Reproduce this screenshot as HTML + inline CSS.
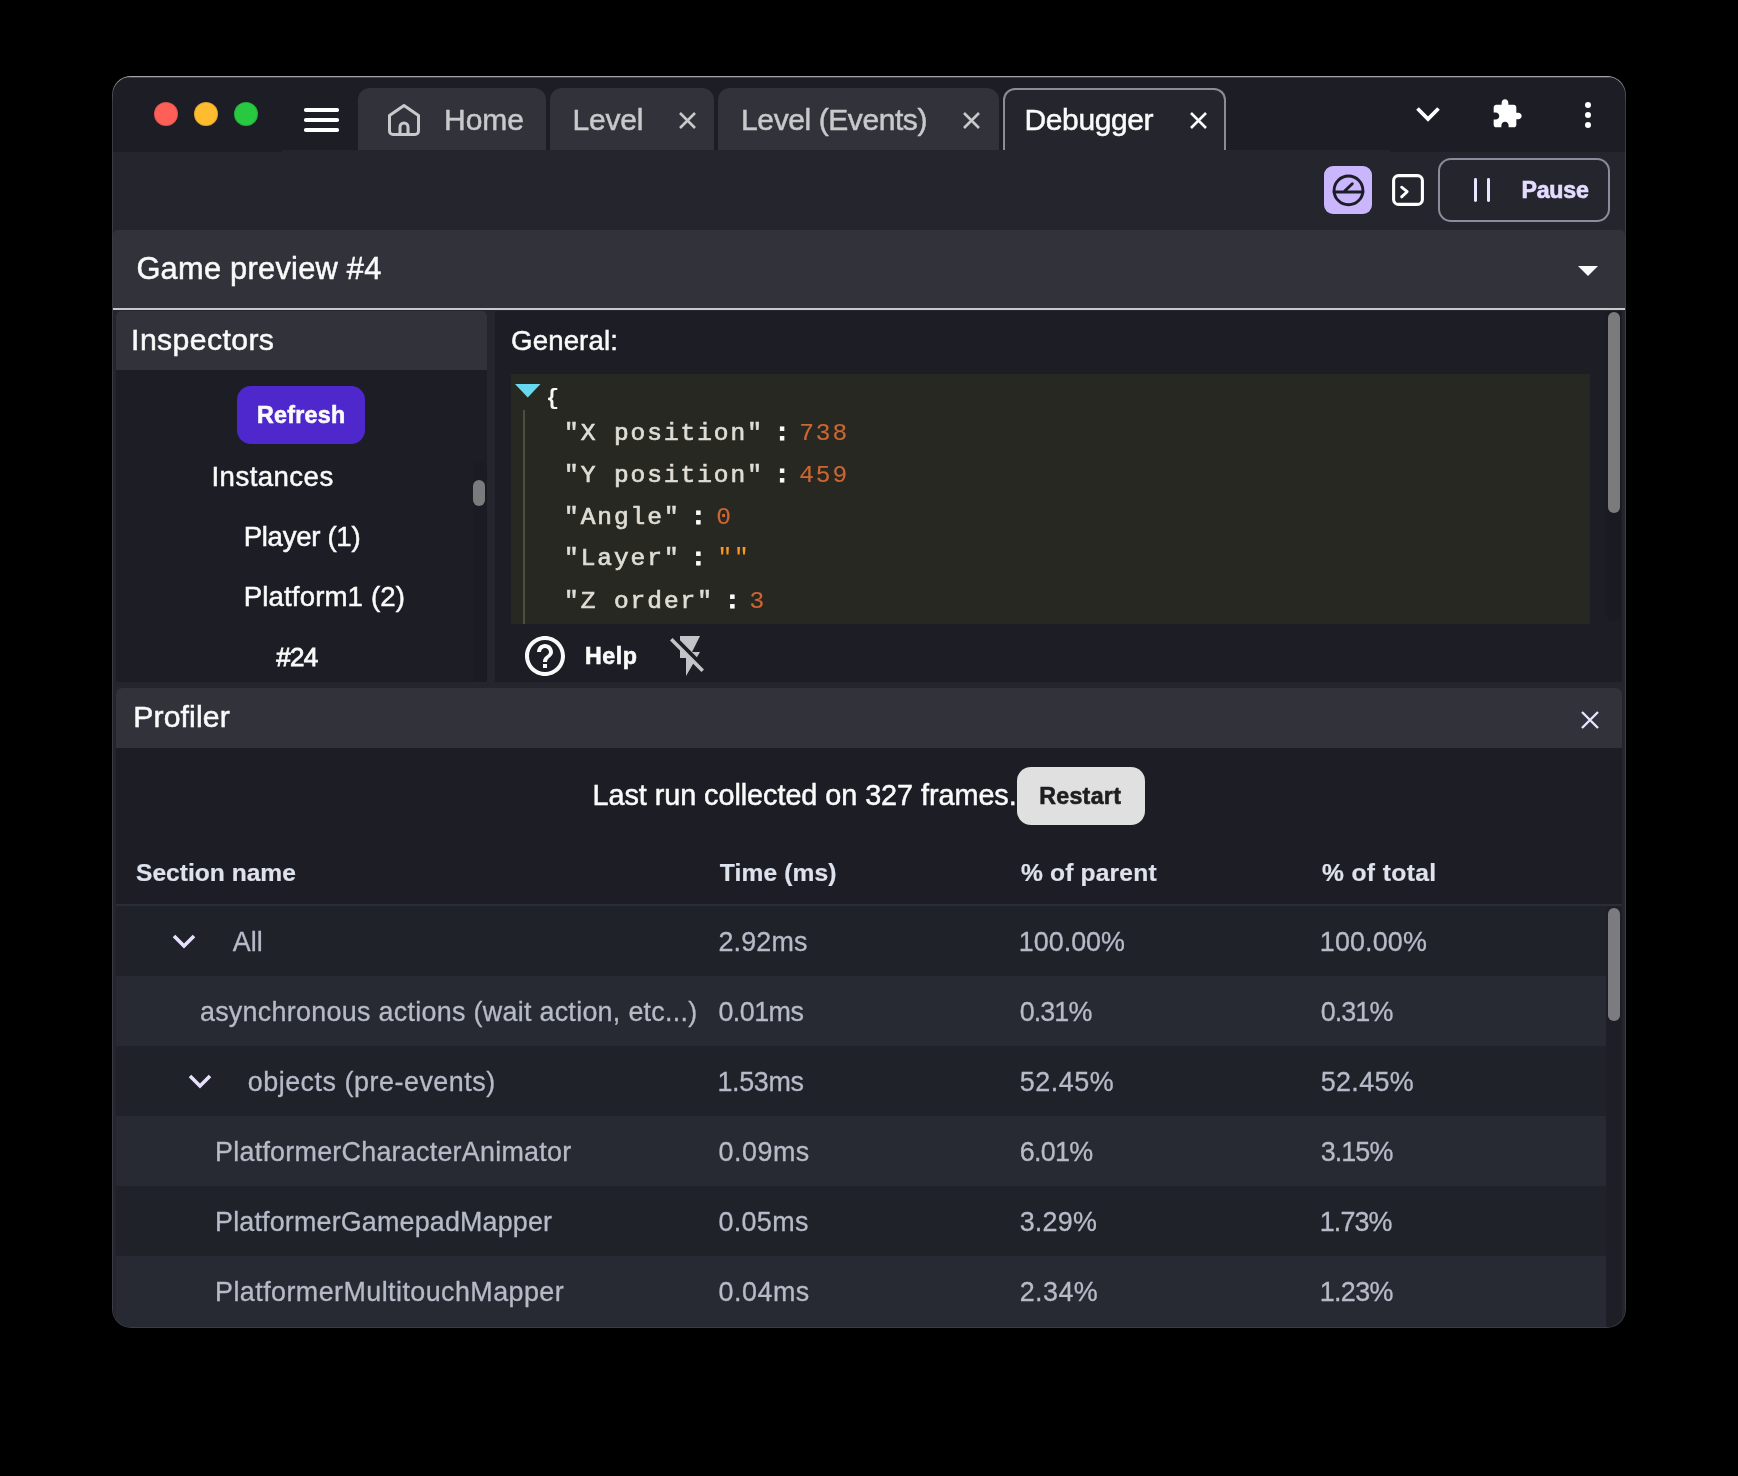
<!DOCTYPE html>
<html><head><meta charset="utf-8">
<style>
*{box-sizing:border-box;margin:0;padding:0}
html,body{width:1738px;height:1476px;background:#000;overflow:hidden;font-family:"Liberation Sans",sans-serif}
.a{position:absolute}
.t{position:absolute;line-height:1;white-space:nowrap}
#frame{position:absolute;left:112px;top:76px;width:1514px;height:1252px;border-radius:19px;background:linear-gradient(#a2a2a8 0px,#a2a2a8 2px,#8a8a90 8px,#55555d 16px,#3b3b44 24px,#3b3b44 100%)}
#win{position:absolute;left:113px;top:77px;width:1512px;height:1250px;border-radius:18px;overflow:hidden;background:#25252e}
#pg{position:absolute;left:-113px;top:-77px;width:1738px;height:1476px;will-change:transform}
.tab{position:absolute;top:88px;height:62px;background:#32323b;border-radius:12px 12px 0 0}
svg{position:absolute;overflow:visible}
.mono{position:absolute;line-height:1;white-space:pre;font-family:"Liberation Mono",monospace}
</style></head>
<body>
<div id="frame"></div><div id="win"><div id="pg">
<div class="a" style="left:113px;top:77px;width:1512px;height:73px;background:#1d1d26"></div>
<div class="a" style="left:113px;top:150px;width:169px;height:2px;background:#1d1d26"></div>
<div class="a" style="left:113px;top:77px;width:1512px;height:1px;background:rgba(170,170,176,0.28)"></div>
<div class="a" style="left:1390px;top:150px;width:235px;height:2px;background:#1d1d26"></div>
<div class="a" style="left:154px;top:102px;width:24px;height:24px;border-radius:50%;background:#fe5f57;box-shadow:inset 0 0 0 1px rgba(0,0,0,0.12)"></div>
<div class="a" style="left:194px;top:102px;width:24px;height:24px;border-radius:50%;background:#febc2e;box-shadow:inset 0 0 0 1px rgba(0,0,0,0.12)"></div>
<div class="a" style="left:234px;top:102px;width:24px;height:24px;border-radius:50%;background:#28c840;box-shadow:inset 0 0 0 1px rgba(0,0,0,0.12)"></div>
<div class="a" style="left:304px;top:108.2px;width:35px;height:3.6px;border-radius:1.8px;background:#fff"></div>
<div class="a" style="left:304px;top:118.2px;width:35px;height:3.6px;border-radius:1.8px;background:#fff"></div>
<div class="a" style="left:304px;top:128.2px;width:35px;height:3.6px;border-radius:1.8px;background:#fff"></div>
<div class="tab" style="left:358px;width:188px"></div>
<svg style="left:388px;top:104px" width="32" height="32" viewBox="0 0 32 32"><path d="M1.5 11.5 L16 1.5 L30.5 11.5 V27 a3.5 3.5 0 0 1 -3.5 3.5 H5 a3.5 3.5 0 0 1 -3.5 -3.5 Z M12 30.5 V23 a4 4 0 0 1 8 0 V30.5" fill="none" stroke="#c9c9cc" stroke-width="3" stroke-linejoin="round"/></svg>
<div class="tab" style="left:550px;width:164px"></div>
<div class="tab" style="left:718px;width:281px"></div>
<div class="tab" style="left:1003px;width:223px;background:#25252e;border:2px solid #8c8c92;border-bottom:none"></div>

<svg style="left:679px;top:112px" width="17" height="17" viewBox="0 0 17 17"><path d="M1 1L16 16M16 1L1 16" stroke="#c9c9cc" stroke-width="2.6"/></svg>
<svg style="left:963px;top:112px" width="17" height="17" viewBox="0 0 17 17"><path d="M1 1L16 16M16 1L1 16" stroke="#c9c9cc" stroke-width="2.6"/></svg>
<svg style="left:1190px;top:112px" width="17" height="17" viewBox="0 0 17 17"><path d="M1 1L16 16M16 1L1 16" stroke="#fafafa" stroke-width="2.6"/></svg>
<div class="t" style="left:444.00px;top:104.50px;font-size:30.0px;font-weight:400;color:#c9c9cc;letter-spacing:-0.000px;-webkit-text-stroke:0.5px currentColor">Home</div>
<div class="t" style="left:572.50px;top:104.50px;font-size:30.0px;font-weight:400;color:#c9c9cc;letter-spacing:-0.225px;-webkit-text-stroke:0.5px currentColor">Level</div>
<div class="t" style="left:741.10px;top:104.50px;font-size:30.0px;font-weight:400;color:#c9c9cc;letter-spacing:-0.415px;-webkit-text-stroke:0.5px currentColor">Level (Events)</div>
<div class="t" style="left:1024.50px;top:104.50px;font-size:30.0px;font-weight:400;color:#fafafa;letter-spacing:-0.386px;-webkit-text-stroke:0.5px currentColor">Debugger</div>
<svg style="left:1416px;top:107px" width="24" height="15" viewBox="0 0 24 15"><path d="M1.5 1.5L12 12L22.5 1.5" fill="none" stroke="#fff" stroke-width="3.8"/></svg>
<svg style="left:1491.3px;top:98.4px" width="32" height="32" viewBox="0 0 24 24"><path fill="#fff" d="M20.5 11H19V7c0-1.1-.9-2-2-2h-4V3.5C13 2.120 11.88 1 10.5 1S8 2.12 8 3.5V5H4c-1.1 0-1.99.9-1.99 2v3.8H3.5c1.49 0 2.7 1.21 2.7 2.7s-1.21 2.7-2.7 2.7H2V20c0 1.1.9 2 2 2h3.8v-1.5c0-1.49 1.21-2.7 2.7-2.7 1.49 0 2.7 1.21 2.7 2.7V22H17c1.1 0 2-.9 2-2v-4h1.5c1.38 0 2.5-1.12 2.5-2.5S21.88 11 20.5 11z"/></svg>
<div class="a" style="left:1585px;top:101.5px;width:6.2px;height:6.2px;border-radius:50%;background:#fff"></div>
<div class="a" style="left:1585px;top:111.5px;width:6.2px;height:6.2px;border-radius:50%;background:#fff"></div>
<div class="a" style="left:1585px;top:121.5px;width:6.2px;height:6.2px;border-radius:50%;background:#fff"></div>
<div class="a" style="left:1324px;top:166px;width:48px;height:48px;border-radius:9px;background:#c9b6fc"></div>
<svg style="left:1324px;top:166px" width="48" height="48" viewBox="0 0 48 48"><circle cx="24.5" cy="24.4" r="14.4" fill="none" stroke="#1d1d26" stroke-width="2.9"/><path d="M10 26H39M19.7 26L28.3 17.7" fill="none" stroke="#1d1d26" stroke-width="2.9" stroke-linecap="round"/></svg>
<svg style="left:1392px;top:174px" width="32" height="32" viewBox="0 0 32 32"><rect x="1.6" y="1.6" width="28.8" height="28.8" rx="5" fill="none" stroke="#fff" stroke-width="3.1"/><path d="M9.6 13.2L15.2 17.7L9.6 22.9" fill="none" stroke="#fff" stroke-width="2.8" stroke-linecap="round" stroke-linejoin="round"/></svg>
<div class="a" style="left:1438px;top:158px;width:172px;height:64px;border-radius:13px;border:2px solid #8e8a9c"></div>
<div class="a" style="left:1474.2px;top:178px;width:2.8px;height:24px;border-radius:1.4px;background:#ebe5ff"></div>
<div class="a" style="left:1487px;top:178px;width:2.8px;height:24px;border-radius:1.4px;background:#ebe5ff"></div>

<div class="t" style="left:1521.40px;top:178.95px;font-size:23.2px;font-weight:700;color:#e5ddff;letter-spacing:-0.225px;-webkit-text-stroke:0.6px currentColor">Pause</div>
<div class="a" style="left:113px;top:230px;width:1512px;height:78px;background:#32323b;border-radius:5px 5px 0 0"></div>
<svg style="left:1578px;top:266px" width="20" height="10" viewBox="0 0 20 10"><path d="M0 0H20L10 10Z" fill="#fafafa"/></svg>
<div class="a" style="left:113px;top:308px;width:1512px;height:2px;background:#c9c9cc"></div>
<div class="a" style="left:113px;top:310px;width:1512px;height:1017px;background:#25252e"></div>
<div class="a" style="left:116px;top:311px;width:371px;height:371px;background:#1d1d26;border-radius:5px 5px 0 0;overflow:hidden"><div class="a" style="left:0;top:0;width:371px;height:59px;background:#32323b"></div></div>
<div class="a" style="left:237px;top:386px;width:128px;height:58px;border-radius:14px;background:#4f28cd"></div>
<div class="a" style="left:473px;top:462px;width:14px;height:220px;border-radius:7px 7px 0 0;background:#1b1b23"></div>
<div class="a" style="left:473px;top:480px;width:12px;height:26px;border-radius:6px;background:#7b7b7d"></div>
<div class="a" style="left:495px;top:311px;width:1127px;height:371px;background:#1d1d26"></div>
<div class="a" style="left:511px;top:374px;width:1079px;height:250px;background:#272822"></div>
<svg style="left:515px;top:384px" width="25.5" height="13.5" viewBox="0 0 25.5 13.5"><path d="M0 0H25.5L12.75 13.5Z" fill="#66d9ef"/></svg>
<div class="a" style="left:523px;top:410px;width:2px;height:214px;background:#4f4c40"></div>
<svg style="left:521px;top:632px" width="48" height="48" viewBox="0 0 24 24"><path fill="#fafafa" d="M11 18h2v-2h-2v2zm1-16C6.480 2 2 6.48 2 12s4.48 10 10 10 10-4.48 10-10S17.52 2 12 2zm0 18c-4.41 0-8-3.59-8-8s3.59-8 8-8 8 3.59 8 8-3.59 8-8 8zm0-14c-2.21 0-4 1.79-4 4h2c0-1.1.9-2 2-2s2 .9 2 2c0 2-3 1.75-3 5h2c0-2.25 3-2.5 3-5 0-2.21-1.79-4-4-4z"/></svg>
<svg style="left:666px;top:632px" width="48" height="48" viewBox="0 0 24 24"><path fill="#c4c4c8" d="M3.27 3L2 4.27l5 5V13h3v9l3.58-6.14L17.73 20 19 18.73 3.27 3zM17 10h-4l4-8H7v2.18l8.46 8.46L17 10z"/></svg>
<div class="a" style="left:1606px;top:311px;width:15px;height:310px;border-radius:0 0 7px 7px;background:#1a1a22"></div>
<div class="a" style="left:1608px;top:312px;width:12px;height:201px;border-radius:6px;background:#7b7b7d"></div>

<div class="t" style="left:136.40px;top:253.60px;font-size:30.8px;font-weight:400;color:#fafafa;letter-spacing:0.257px;-webkit-text-stroke:0.5px currentColor">Game preview #4</div>
<div class="t" style="left:131.10px;top:324.93px;font-size:30.2px;font-weight:400;color:#fafafa;letter-spacing:0.400px;-webkit-text-stroke:0.5px currentColor">Inspectors</div>
<div class="t" style="left:511.10px;top:327.24px;font-size:27.6px;font-weight:400;color:#fafafa;letter-spacing:0.129px;-webkit-text-stroke:0.5px currentColor">General:</div>
<div class="t" style="left:257.00px;top:403.89px;font-size:23.2px;font-weight:700;color:#fafafa;letter-spacing:0.300px;-webkit-text-stroke:0.6px currentColor">Refresh</div>
<div class="t" style="left:211.50px;top:463.48px;font-size:27.6px;font-weight:400;color:#fafafa;letter-spacing:0.450px;-webkit-text-stroke:0.5px currentColor">Instances</div>
<div class="t" style="left:243.70px;top:523.30px;font-size:27.6px;font-weight:400;color:#fafafa;letter-spacing:-0.300px;-webkit-text-stroke:0.5px currentColor">Player (1)</div>
<div class="t" style="left:243.70px;top:582.70px;font-size:27.6px;font-weight:400;color:#fafafa;letter-spacing:0.150px;-webkit-text-stroke:0.5px currentColor">Platform1 (2)</div>
<div class="t" style="left:276.30px;top:643.98px;font-size:26.0px;font-weight:500;color:#fafafa;letter-spacing:-0.750px;-webkit-text-stroke:0.8px currentColor">#24</div>
<div class="t" style="left:584.90px;top:645.28px;font-size:23.2px;font-weight:700;color:#fafafa;letter-spacing:0.600px;-webkit-text-stroke:0.6px currentColor">Help</div>
<div class="mono" style="left:546px;top:388px;font-size:22px;color:#f9f8f5;font-weight:bold">{</div>
<div class="mono" style="left:564.0px;top:422.16px;font-size:24.5px;letter-spacing:1.95px;-webkit-text-stroke:0.7px currentColor;color:#dfddd4">"X position"</div>
<div class="mono" style="left:774.80px;top:422.16px;font-size:24.5px;letter-spacing:1.95px;-webkit-text-stroke:0.7px currentColor;color:#fff;font-weight:bold;-webkit-text-stroke:0.9px #fff">:</div>
<div class="mono" style="left:799.20px;top:422.16px;font-size:24.5px;letter-spacing:1.95px;-webkit-text-stroke:0.7px currentColor;color:#cc6633;-webkit-text-stroke:0.15px #cc6633">738</div>
<div class="mono" style="left:564.0px;top:463.56px;font-size:24.5px;letter-spacing:1.95px;-webkit-text-stroke:0.7px currentColor;color:#dfddd4">"Y position"</div>
<div class="mono" style="left:774.80px;top:463.56px;font-size:24.5px;letter-spacing:1.95px;-webkit-text-stroke:0.7px currentColor;color:#fff;font-weight:bold;-webkit-text-stroke:0.9px #fff">:</div>
<div class="mono" style="left:799.20px;top:463.56px;font-size:24.5px;letter-spacing:1.95px;-webkit-text-stroke:0.7px currentColor;color:#cc6633;-webkit-text-stroke:0.15px #cc6633">459</div>
<div class="mono" style="left:564.0px;top:506.06px;font-size:24.5px;letter-spacing:1.95px;-webkit-text-stroke:0.7px currentColor;color:#dfddd4">"Angle"</div>
<div class="mono" style="left:690.90px;top:506.06px;font-size:24.5px;letter-spacing:1.95px;-webkit-text-stroke:0.7px currentColor;color:#fff;font-weight:bold;-webkit-text-stroke:0.9px #fff">:</div>
<div class="mono" style="left:716.30px;top:506.06px;font-size:24.5px;letter-spacing:1.95px;-webkit-text-stroke:0.7px currentColor;color:#cc6633;-webkit-text-stroke:0.15px #cc6633">0</div>
<div class="mono" style="left:564.0px;top:547.46px;font-size:24.5px;letter-spacing:1.95px;-webkit-text-stroke:0.7px currentColor;color:#dfddd4">"Layer"</div>
<div class="mono" style="left:690.90px;top:547.46px;font-size:24.5px;letter-spacing:1.95px;-webkit-text-stroke:0.7px currentColor;color:#fff;font-weight:bold;-webkit-text-stroke:0.9px #fff">:</div>
<div class="mono" style="left:717.40px;top:547.46px;font-size:24.5px;letter-spacing:1.95px;-webkit-text-stroke:0.7px currentColor;color:#fd971f;-webkit-text-stroke:0.15px #fd971f">""</div>
<div class="mono" style="left:564.0px;top:589.96px;font-size:24.5px;letter-spacing:1.95px;-webkit-text-stroke:0.7px currentColor;color:#dfddd4">"Z order"</div>
<div class="mono" style="left:725.10px;top:589.96px;font-size:24.5px;letter-spacing:1.95px;-webkit-text-stroke:0.7px currentColor;color:#fff;font-weight:bold;-webkit-text-stroke:0.9px #fff">:</div>
<div class="mono" style="left:749.50px;top:589.96px;font-size:24.5px;letter-spacing:1.95px;-webkit-text-stroke:0.7px currentColor;color:#cc6633;-webkit-text-stroke:0.15px #cc6633">3</div>
<div class="a" style="left:116px;top:688px;width:1506px;height:639px;background:#1d1d26;border-radius:6px 6px 0 0;overflow:hidden"><div class="a" style="left:0;top:0;width:1506px;height:60px;background:#32323b"></div></div>
<svg style="left:1581px;top:711px" width="18" height="18" viewBox="0 0 18 18"><path d="M1 1L17 17M17 1L1 17" stroke="#e9e3ff" stroke-width="2.4"/></svg>
<div class="a" style="left:1017px;top:767px;width:128px;height:58px;border-radius:14px;background:#e0e0e0"></div>
<div class="a" style="left:116px;top:904px;width:1506px;height:2px;background:#2a2c36"></div>
<div class="a" style="left:1606px;top:906px;width:16px;height:421px;background:#1e1e27"></div>
<div class="a" style="left:1608px;top:908px;width:12px;height:113px;border-radius:6px;background:#7c7c80"></div>

<div class="t" style="left:133.20px;top:701.69px;font-size:30.2px;font-weight:400;color:#fafafa;letter-spacing:0.129px;-webkit-text-stroke:0.5px currentColor">Profiler</div>
<div class="t" style="left:592.50px;top:780.72px;font-size:28.8px;font-weight:400;color:#fafafa;letter-spacing:-0.050px;-webkit-text-stroke:0.5px currentColor">Last run collected on 327 frames.</div>
<div class="t" style="left:1039.20px;top:784.93px;font-size:23.2px;font-weight:700;color:#1e1e20;letter-spacing:0.300px;-webkit-text-stroke:0.6px currentColor">Restart</div>
<div class="t" style="left:136.00px;top:861.34px;font-size:24.6px;font-weight:701;color:#dde2ec;letter-spacing:0.000px;-webkit-text-stroke:0.2px currentColor">Section name</div>
<div class="t" style="left:719.80px;top:860.72px;font-size:24.6px;font-weight:701;color:#dde2ec;letter-spacing:0.112px;-webkit-text-stroke:0.2px currentColor">Time (ms)</div>
<div class="t" style="left:1020.90px;top:860.84px;font-size:24.6px;font-weight:701;color:#dde2ec;letter-spacing:0.180px;-webkit-text-stroke:0.2px currentColor">% of parent</div>
<div class="t" style="left:1321.90px;top:860.84px;font-size:24.6px;font-weight:701;color:#dde2ec;letter-spacing:0.400px;-webkit-text-stroke:0.2px currentColor">% of total</div>
<div class="a" style="left:116px;top:906px;width:1490px;height:70px;background:#20222a"></div>
<svg style="left:172px;top:934px" width="24" height="15" viewBox="0 0 24 15"><path d="M2 2L12 12L22 2" fill="none" stroke="#e8e0ff" stroke-width="3.6"/></svg>
<div class="t" style="left:232.80px;top:929.11px;font-size:26.9px;font-weight:400;color:#b6bbc8;letter-spacing:0.000px;-webkit-text-stroke:0.3px currentColor">All</div>
<div class="t" style="left:718.40px;top:929.11px;font-size:26.9px;font-weight:400;color:#b6bbc8;letter-spacing:0.180px;-webkit-text-stroke:0.3px currentColor">2.92ms</div>
<div class="t" style="left:1018.80px;top:929.11px;font-size:26.9px;font-weight:400;color:#b6bbc8;letter-spacing:-0.000px;-webkit-text-stroke:0.3px currentColor">100.00%</div>
<div class="t" style="left:1319.80px;top:929.11px;font-size:26.9px;font-weight:400;color:#b6bbc8;letter-spacing:0.150px;-webkit-text-stroke:0.3px currentColor">100.00%</div>
<div class="a" style="left:116px;top:976px;width:1490px;height:70px;background:#282a33"></div>
<div class="t" style="left:199.90px;top:999.11px;font-size:26.9px;font-weight:400;color:#b6bbc8;letter-spacing:0.285px;-webkit-text-stroke:0.3px currentColor">asynchronous actions (wait action, etc...)</div>
<div class="t" style="left:718.40px;top:999.11px;font-size:26.9px;font-weight:400;color:#b6bbc8;letter-spacing:-0.540px;-webkit-text-stroke:0.3px currentColor">0.01ms</div>
<div class="t" style="left:1019.70px;top:999.11px;font-size:26.9px;font-weight:400;color:#b6bbc8;letter-spacing:-0.900px;-webkit-text-stroke:0.3px currentColor">0.31%</div>
<div class="t" style="left:1320.70px;top:999.11px;font-size:26.9px;font-weight:400;color:#b6bbc8;letter-spacing:-0.900px;-webkit-text-stroke:0.3px currentColor">0.31%</div>
<div class="a" style="left:116px;top:1046px;width:1490px;height:70px;background:#20222a"></div>
<svg style="left:188px;top:1074px" width="24" height="15" viewBox="0 0 24 15"><path d="M2 2L12 12L22 2" fill="none" stroke="#e8e0ff" stroke-width="3.6"/></svg>
<div class="t" style="left:247.70px;top:1069.11px;font-size:26.9px;font-weight:400;color:#b6bbc8;letter-spacing:0.521px;-webkit-text-stroke:0.3px currentColor">objects (pre-events)</div>
<div class="t" style="left:717.50px;top:1069.11px;font-size:26.9px;font-weight:400;color:#b6bbc8;letter-spacing:-0.360px;-webkit-text-stroke:0.3px currentColor">1.53ms</div>
<div class="t" style="left:1019.70px;top:1069.11px;font-size:26.9px;font-weight:400;color:#b6bbc8;letter-spacing:0.540px;-webkit-text-stroke:0.3px currentColor">52.45%</div>
<div class="t" style="left:1320.70px;top:1069.11px;font-size:26.9px;font-weight:400;color:#b6bbc8;letter-spacing:0.360px;-webkit-text-stroke:0.3px currentColor">52.45%</div>
<div class="a" style="left:116px;top:1116px;width:1490px;height:70px;background:#282a33"></div>
<div class="t" style="left:215.10px;top:1139.11px;font-size:26.9px;font-weight:400;color:#b6bbc8;letter-spacing:0.242px;-webkit-text-stroke:0.3px currentColor">PlatformerCharacterAnimator</div>
<div class="t" style="left:718.40px;top:1139.11px;font-size:26.9px;font-weight:400;color:#b6bbc8;letter-spacing:0.540px;-webkit-text-stroke:0.3px currentColor">0.09ms</div>
<div class="t" style="left:1019.70px;top:1139.11px;font-size:26.9px;font-weight:400;color:#b6bbc8;letter-spacing:-0.675px;-webkit-text-stroke:0.3px currentColor">6.01%</div>
<div class="t" style="left:1320.70px;top:1139.11px;font-size:26.9px;font-weight:400;color:#b6bbc8;letter-spacing:-0.900px;-webkit-text-stroke:0.3px currentColor">3.15%</div>
<div class="a" style="left:116px;top:1186px;width:1490px;height:70px;background:#20222a"></div>
<div class="t" style="left:215.10px;top:1209.11px;font-size:26.9px;font-weight:400;color:#b6bbc8;letter-spacing:0.164px;-webkit-text-stroke:0.3px currentColor">PlatformerGamepadMapper</div>
<div class="t" style="left:718.40px;top:1209.11px;font-size:26.9px;font-weight:400;color:#b6bbc8;letter-spacing:0.360px;-webkit-text-stroke:0.3px currentColor">0.05ms</div>
<div class="t" style="left:1019.70px;top:1209.11px;font-size:26.9px;font-weight:400;color:#b6bbc8;letter-spacing:0.225px;-webkit-text-stroke:0.3px currentColor">3.29%</div>
<div class="t" style="left:1319.80px;top:1209.11px;font-size:26.9px;font-weight:400;color:#b6bbc8;letter-spacing:-0.900px;-webkit-text-stroke:0.3px currentColor">1.73%</div>
<div class="a" style="left:116px;top:1256px;width:1490px;height:71px;background:#282a33"></div>
<div class="t" style="left:215.10px;top:1279.11px;font-size:26.9px;font-weight:400;color:#b6bbc8;letter-spacing:0.432px;-webkit-text-stroke:0.3px currentColor">PlatformerMultitouchMapper</div>
<div class="t" style="left:718.40px;top:1279.11px;font-size:26.9px;font-weight:400;color:#b6bbc8;letter-spacing:0.540px;-webkit-text-stroke:0.3px currentColor">0.04ms</div>
<div class="t" style="left:1019.70px;top:1279.11px;font-size:26.9px;font-weight:400;color:#b6bbc8;letter-spacing:0.450px;-webkit-text-stroke:0.3px currentColor">2.34%</div>
<div class="t" style="left:1319.80px;top:1279.11px;font-size:26.9px;font-weight:400;color:#b6bbc8;letter-spacing:-0.675px;-webkit-text-stroke:0.3px currentColor">1.23%</div>
</div></div>
</body></html>
